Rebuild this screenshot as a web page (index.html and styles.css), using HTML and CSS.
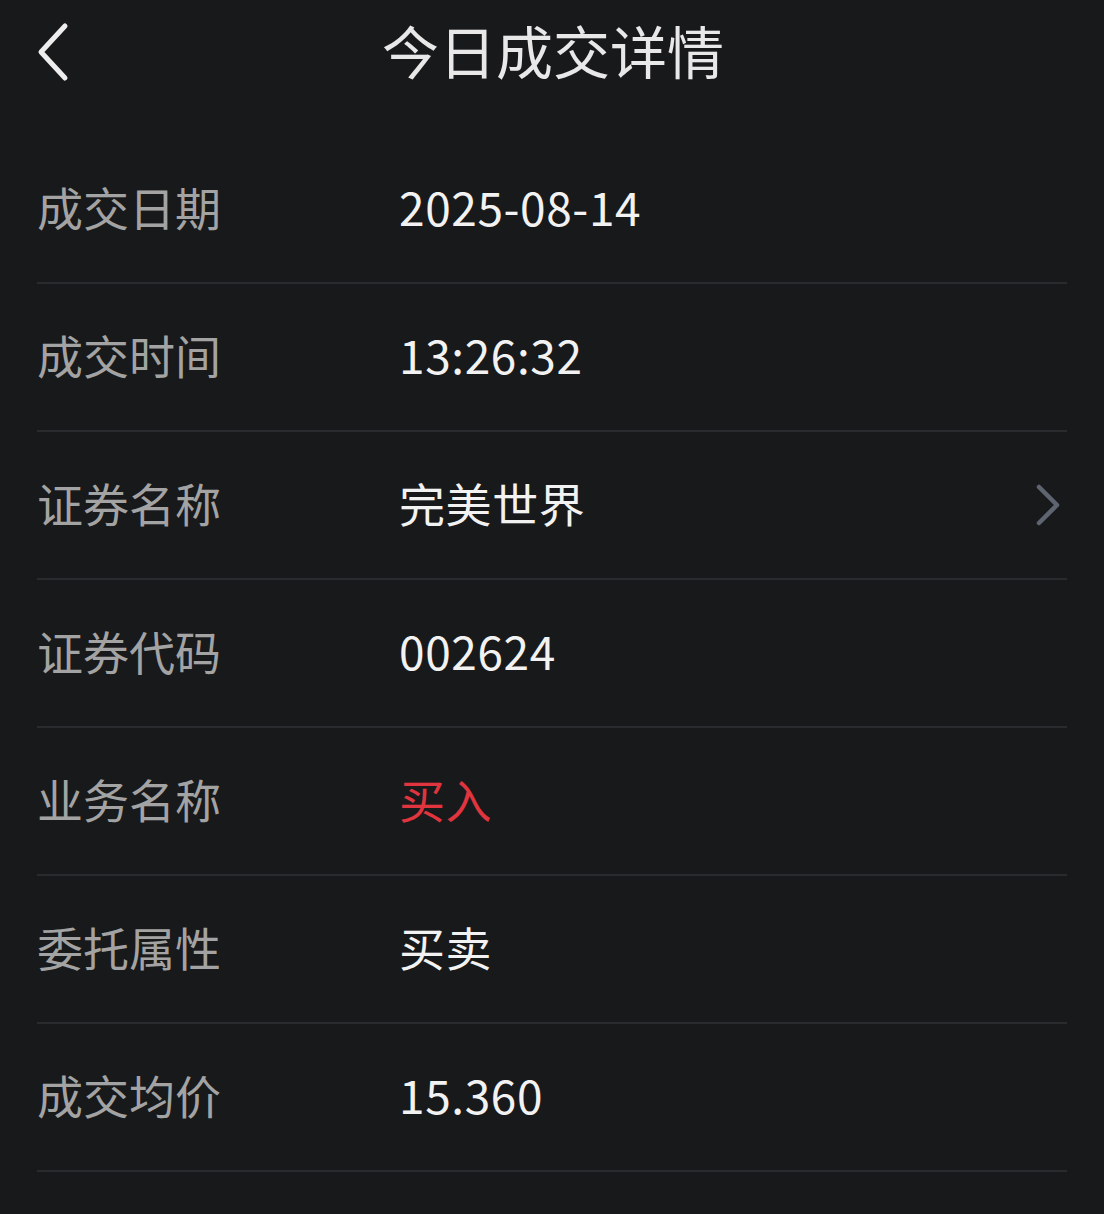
FILE: index.html
```html
<!doctype html>
<html>
<head>
<meta charset="utf-8">
<title>今日成交详情</title>
<link rel="stylesheet" href="styles.css">
</head>
<body>
<div class="header">
	<a class="back" href="#">
		<svg width="40" height="64" viewBox="0 0 40 64"><path d="M32 6 L8 32 L32 58" fill="none" stroke="#ededed" stroke-width="5" stroke-linecap="round" stroke-linejoin="round"/></svg>
	</a>
	<h1>今日成交详情</h1>
</div>
<div class="list">
	<div class="row"><span class="label">成交日期</span><span class="value">2025-08-14</span></div>
	<div class="row"><span class="label">成交时间</span><span class="value">13:26:32</span></div>
	<div class="row"><span class="label">证券名称</span><span class="value">完美世界</span>
		<svg class="more" width="30" height="44" viewBox="0 0 30 44"><path d="M6 4 L24 22 L6 40" fill="none" stroke="#5f6570" stroke-width="4.5" stroke-linecap="round" stroke-linejoin="round"/></svg>
	</div>
	<div class="row"><span class="label">证券代码</span><span class="value">002624</span></div>
	<div class="row"><span class="label">业务名称</span><span class="value buy">买入</span></div>
	<div class="row"><span class="label">委托属性</span><span class="value">买卖</span></div>
	<div class="row"><span class="label">成交均价</span><span class="value">15.360</span></div>
</div>
</body>
</html>
```

FILE: styles.css
```css
* {padding:0;margin:0;box-sizing:border-box;}
body {
	background:#18191b;
	font-family:"Noto Sans CJK SC","Noto Sans",sans-serif;
	color:#efefef;
}
.header {
	height:136px;
	position:relative;
	display:flex;
	align-items:flex-start;
	justify-content:center;
}
.header h1 {
	font-size:57px;
	font-weight:400;
	line-height:98px;
	color:#e8e8e8;
	margin-left:2px;
}
.back {
	position:absolute;
	left:33px;
	top:20px;
}
.list {
	padding:0 37px;
}
.row {
	display:flex;
	align-items:center;
	height:148px;
	padding-bottom:6px;
	border-bottom:2px solid #2a2b2e;
}
.label {
	width:362px;
	font-size:46px;
	color:#a3a3a3;
}
.value {
	flex:1;
	font-size:46px;
	letter-spacing:0.6px;
	color:#f2f2f2;
}
.value.buy {
	color:#e0353f;
}
.more {
	margin-right:4px;
	margin-top:6px;
}
```
